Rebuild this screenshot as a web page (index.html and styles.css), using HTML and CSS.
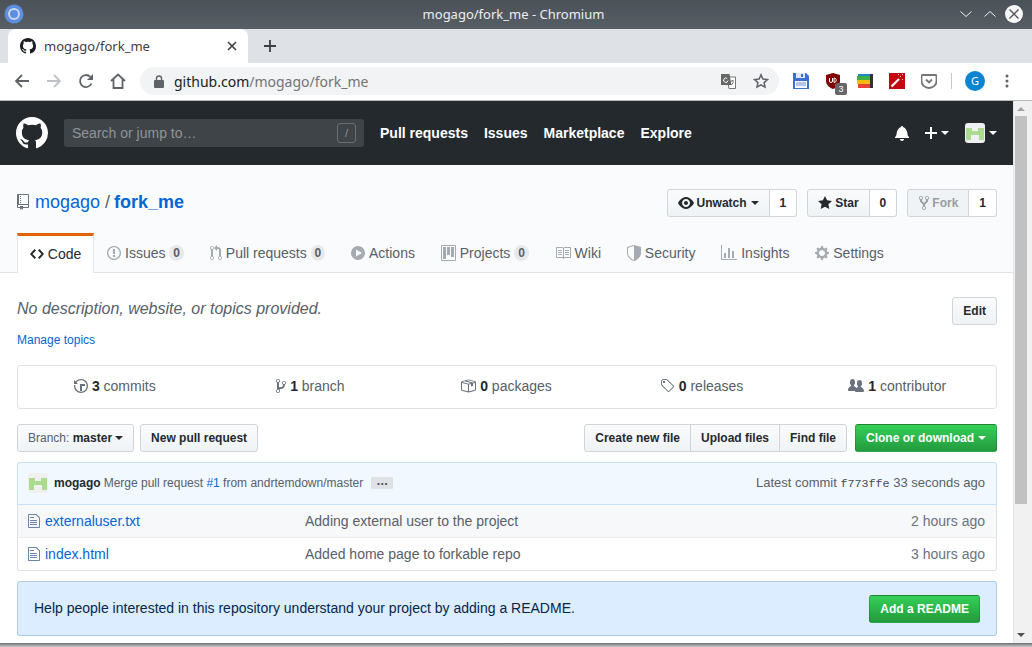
FILE: index.html
```html
<!DOCTYPE html>
<html lang="en">

<head>
  <meta charset="UTF-8">
  <title>mogago/fork_me - Chromium</title>
  <link rel="stylesheet" href="styles.css">
</head>

<body>
  <!-- Window title bar -->
  <div class="titlebar">
    <svg class="win-logo" width="20" height="20" viewBox="0 0 20 20"><circle cx="10" cy="10" r="9.5" fill="#5c8fe0"/><circle cx="10" cy="10" r="5" fill="none" stroke="#c9d6ea" stroke-width="2"/><circle cx="10" cy="10" r="3" fill="#5c8fe0"/></svg>
    <div class="win-title">mogago/fork_me - Chromium</div>
    <div class="win-controls">
      <svg width="14" height="14" viewBox="0 0 14 14"><path d="M1.5 4.500L7 9.500l5.500-5" fill="none" stroke="#f0f0f0" stroke-width="1"/></svg>
      <svg width="14" height="14" viewBox="0 0 14 14"><path d="M1.5 9.500L7 4.500l5.500 5" fill="none" stroke="#f0f0f0" stroke-width="1"/></svg>
      <svg class="win-close" width="18" height="18" viewBox="0 0 18 18"><circle cx="9" cy="9" r="9" fill="#f7f7f7"/><path d="M4.500 4.500l9 9M13.500 4.500l-9 9" stroke="#4d545b" stroke-width="1.3"/></svg>
    </div>
  </div>

  <!-- Tab strip -->
  <div class="tabstrip">
    <div class="browser-tab">
      <svg width="16" height="16" viewBox="0 0 16 16"><path fill="#1b1f23" fill-rule="evenodd" d="M8 0C3.58 0 0 3.58 0 8c0 3.54 2.29 6.53 5.47 7.59.4.07.55-.17.55-.38 0-.19-.01-.82-.01-1.49-2.01.37-2.53-.49-2.69-.94-.09-.23-.48-.94-.82-1.13-.28-.15-.68-.52-.01-.53.63-.01 1.08.58 1.23.82.72 1.21 1.87.87 2.33.66.07-.52.28-.87.51-1.07-1.78-.2-3.64-.89-3.64-3.95 0-.87.31-1.59.82-2.15-.08-.2-.36-1.02.08-2.12 0 0 .67-.21 2.2.82.64-.18 1.32-.27 2-.27.68 0 1.36.09 2 .27 1.53-1.04 2.2-.82 2.2-.82.44 1.1.16 1.92.08 2.12.51.56.82 1.27.82 2.15 0 3.07-1.87 3.75-3.65 3.95.29.25.54.73.54 1.48 0 1.07-.01 1.93-.01 2.2 0 .21.15.46.55.38A8.013 8.013 0 0016 8c0-4.42-3.58-8-8-8z"/></svg>
      <span class="browser-tab-title">mogago/fork_me</span>
      <svg width="10" height="10" viewBox="0 0 10 10"><path d="M1 1l8 8M9 1l-8 8" stroke="#3c4043" stroke-width="1.6"/></svg>
    </div>
    <svg class="newtab" width="14" height="14" viewBox="0 0 14 14"><path d="M7 1v12M1 7h12" stroke="#3c4043" stroke-width="1.8"/></svg>
  </div>

  <!-- Toolbar -->
  <div class="toolbar">
    <div class="nav-icons">
      <svg width="16" height="16" viewBox="0 0 16 16"><path d="M15 8H2M8 2L2 8l6 6" fill="none" stroke="#5f6368" stroke-width="1.8"/></svg>
      <svg width="16" height="16" viewBox="0 0 16 16"><path d="M1 8h13M8 2l6 6-6 6" fill="none" stroke="#bdc1c6" stroke-width="1.8"/></svg>
      <svg width="16" height="16" viewBox="0 0 16 16"><path d="M13.5 10.500A6 6 0 1 1 12.3 3.800" fill="none" stroke="#5f6368" stroke-width="1.8"/><path d="M15 1v6H9z" fill="#5f6368"/></svg>
      <svg width="16" height="16" viewBox="0 0 16 16"><path d="M1 8l7-6.500L15 8M3.500 6.500V15h9V6.500" fill="none" stroke="#5f6368" stroke-width="1.8"/></svg>
    </div>
    <div class="omnibox">
      <svg width="10" height="13" viewBox="0 0 10 13"><path fill="#5f6368" fill-rule="evenodd" d="M1 5h.8V3.500a3.200 3.200 0 0 1 6.400 0V5H9a1 1 0 0 1 1 1v6a1 1 0 0 1-1 1H1a1 1 0 0 1-1-1V6a1 1 0 0 1 1-1zM3.200 5h3.600V3.500a1.800 1.800 0 0 0-3.600 0z"/></svg>
      <div class="url"><span class="url-host">github.com</span>/mogago/fork_me</div>
      <svg class="translate" width="15" height="15" viewBox="0 0 15 15"><path d="M6 3h8.500v11.500H8z" fill="#fff" stroke="#757575"/><path d="M0 0h8.500l2 11H0z" fill="#666"/><path d="M7 6.500a2.200 2.200 0 1 1-.8-2" fill="none" stroke="#fff"/><path d="M10 7h3M11.500 6v1M10.500 11l2-3" stroke="#757575" fill="none"/></svg>
      <svg width="16" height="16" viewBox="0 0 16 16"><path d="M8 1.800l1.900 4.200 4.600.5-3.400 3.100.9 4.500-4-2.300-4 2.300.9-4.500-3.400-3.100 4.600-.5z" fill="none" stroke="#5f6368" stroke-width="1.5"/></svg>
    </div>
    <div class="ext-icons">
      <svg width="16" height="16" viewBox="0 0 16 16"><path d="M0 0h13l3 3v13H0z" fill="#3b6fd4"/><path d="M3 0h9v5H3z" fill="#dfe7f7"/><path d="M8 1h2v3H8z" fill="#3b6fd4"/><path d="M2 8h12v7H2z" fill="#fff"/><path d="M3 10h10M3 12h10" stroke="#6b8fd8"/></svg>
      <div class="ext-ublock">
        <svg width="16" height="16" viewBox="0 0 16 16"><path d="M8 0l7 2v6c0 4-4 7-7 8-3-1-7-4-7-8V2z" fill="#800000"/><path d="M4.500 5v3a1.500 1.500 0 0 0 3 0V5M9 5v4.500M9 5c3 0 3 4.500 0 4.500" fill="none" stroke="#fff"/></svg>
        <span class="ext-badge">3</span>
      </div>
      <svg width="16" height="16" viewBox="0 0 16 16"><path d="M1 1h15v14H1z" fill="#333"/><path d="M1 1h12v2H1z" fill="#1e88c7"/><path d="M0 3h13v4H0z" fill="#3fae49"/><path d="M0 7h13v4H0z" fill="#fbb80f"/><path d="M1 11h12v4H1z" fill="#ea4335"/></svg>
      <svg width="16" height="16" viewBox="0 0 16 16"><path d="M0 0h16v16H0z" fill="#c40812"/><path d="M2.500 13.500L10 6" stroke="#fff" stroke-width="2.2"/><path d="M11 3l1 1M13 6l1 1M13 2l1-1M9 1l1 1" stroke="#f4c9c9"/></svg>
      <svg width="16" height="16" viewBox="0 0 16 16"><path d="M1.500 2h13a1 1 0 0 1 1 1v5a7.500 7 0 0 1-15 0V3a1 1 0 0 1 1-1z" fill="none" stroke="#757575" stroke-width="1.8"/><path d="M5 6.500L8 9.500l3-3" fill="none" stroke="#757575" stroke-width="1.8"/></svg>
      <div class="toolbar-sep"></div>
      <div class="profile">G</div>
      <svg class="menu-dots" width="4" height="14" viewBox="0 0 4 14"><circle cx="2" cy="2" r="1.5" fill="#5f6368"/><circle cx="2" cy="7" r="1.5" fill="#5f6368"/><circle cx="2" cy="12" r="1.5" fill="#5f6368"/></svg>
    </div>
  </div>

  <div class="viewport">
    <div class="page">
      <!-- GitHub header -->
      <header class="gh-header">
        <svg class="gh-logo" width="32" height="32" viewBox="0 0 16 16"><path fill="#fff" fill-rule="evenodd" d="M8 0C3.58 0 0 3.58 0 8c0 3.54 2.29 6.53 5.47 7.59.4.07.55-.17.55-.38 0-.19-.01-.82-.01-1.49-2.01.37-2.53-.49-2.69-.94-.09-.23-.48-.94-.82-1.13-.28-.15-.68-.52-.01-.53.63-.01 1.08.58 1.23.82.72 1.21 1.87.87 2.33.66.07-.52.28-.87.51-1.07-1.78-.2-3.64-.89-3.64-3.95 0-.87.31-1.59.82-2.15-.08-.2-.36-1.02.08-2.12 0 0 .67-.21 2.2.82.64-.18 1.32-.27 2-.27.68 0 1.36.09 2 .27 1.53-1.04 2.2-.82 2.2-.82.44 1.1.16 1.92.08 2.12.51.56.82 1.27.82 2.15 0 3.07-1.87 3.75-3.65 3.95.29.25.54.73.54 1.48 0 1.07-.01 1.93-.01 2.2 0 .21.15.46.55.38A8.013 8.013 0 0016 8c0-4.42-3.58-8-8-8z"/></svg>
        <div class="gh-search">
          <span>Search or jump to…</span>
          <span class="slash-key">/</span>
        </div>
        <nav class="gh-nav">
          <a>Pull requests</a>
          <a>Issues</a>
          <a>Marketplace</a>
          <a>Explore</a>
        </nav>
        <div class="gh-user">
          <svg width="14" height="16" viewBox="0 0 14 16"><path fill="#fff" d="M14 12v1H0v-1l.73-.58c.77-.77.81-2.55 1.19-4.42C2.69 3.23 6 2 6 2c0-.55.45-1 1-1s1 .45 1 1c0 0 3.39 1.23 4.16 5 .38 1.88.42 3.66 1.19 4.42l.66.58H14zm-7 4c1.11 0 2-.89 2-2H5c0 1.11.89 2 2 2z"/></svg>
          <div class="gh-plus">
            <svg width="12" height="16" viewBox="0 0 12 16"><path fill="#fff" d="M12 9H7v5H5V9H0V7h5V2h2v5h5v2z"/></svg>
            <span class="caret caret-white"></span>
          </div>
          <div class="gh-avatar-wrap">
            <svg class="identicon" width="20" height="20" viewBox="0 0 20 20"><path d="M0 0h20v20H0z" fill="#f0f0f0"/><path d="M1 5h6v3h6V5h6v12h-5v-5H6v5H1z" fill="#abdb8f"/></svg>
            <span class="caret caret-white"></span>
          </div>
        </div>
      </header>

      <!-- Repo head -->
      <section class="repohead">
        <div class="repo-title-row">
          <h1 class="repo-title">
            <svg width="12" height="16" viewBox="0 0 12 16"><path fill="#6a737d" d="M4 9H3V8h1v1zm0-3H3v1h1V6zm0-2H3v1h1V4zm0-2H3v1h1V2zm8-1v12c0 .55-.45 1-1 1H6v2l-1.5-1.5L3 16v-2H1c-.55 0-1-.45-1-1V1c0-.55.45-1 1-1h10c.55 0 1 .45 1 1zm-1 10H1v2h2v-1h3v1h5v-2zm0-10H2v9h9V1z"/></svg>
            <a class="repo-owner">mogago</a>
            <span class="repo-sep">/</span>
            <a class="repo-name">fork_me</a>
          </h1>
          <div class="repo-actions">
            <div class="btn-pair">
              <a class="btn">
                <svg width="16" height="16" viewBox="0 0 16 16"><path fill="#24292e" d="M8.06 2C3 2 0 8 0 8s3 6 8.06 6C13 14 16 8 16 8s-3-6-7.94-6zM8 12c-2.2 0-4-1.78-4-4 0-2.2 1.8-4 4-4 2.22 0 4 1.8 4 4 0 2.22-1.78 4-4 4zm2-4c0 1.11-.89 2-2 2-1.11 0-2-.89-2-2 0-1.11.89-2 2-2 1.11 0 2 .89 2 2z"/></svg>
                Unwatch <span class="caret"></span>
              </a>
              <span class="social-count">1</span>
            </div>
            <div class="btn-pair">
              <a class="btn">
                <svg width="14" height="16" viewBox="0 0 14 16"><path fill="#24292e" d="M14 6l-4.9-.64L7 1 4.9 5.36 0 6l3.6 3.26L2.67 14 7 11.67 11.33 14l-.93-4.74L14 6z"/></svg>
                Star
              </a>
              <span class="social-count">0</span>
            </div>
            <div class="btn-pair">
              <a class="btn btn-disabled">
                <svg width="10" height="16" viewBox="0 0 10 16"><path fill="#959da5" fill-rule="evenodd" d="M8 1a1.993 1.993 0 00-1 3.72V6L5 8 3 6V4.72A1.993 1.993 0 002 1a1.993 1.993 0 00-1 3.72V6.5l3 3v1.78A1.993 1.993 0 005 15a1.993 1.993 0 001-3.72V9.5l3-3V4.72A1.993 1.993 0 008 1zM2 4.2C1.34 4.2.8 3.65.8 3c0-.65.55-1.2 1.2-1.2.65 0 1.2.55 1.2 1.2 0 .65-.55 1.2-1.2 1.2zm3 10c-.66 0-1.2-.55-1.2-1.2 0-.65.55-1.2 1.2-1.2.65 0 1.2.55 1.2 1.2 0 .65-.55 1.2-1.2 1.2zm3-10c-.66 0-1.2-.55-1.2-1.2 0-.65.55-1.2 1.2-1.2.65 0 1.2.55 1.2 1.2 0 .65-.55 1.2-1.2 1.2z"/></svg>
                Fork
              </a>
              <span class="social-count">1</span>
            </div>
          </div>
        </div>

        <nav class="repo-tabs">
          <a class="repo-tab selected">
            <svg width="14" height="16" viewBox="0 0 14 16"><path fill="#24292e" d="M9.5 3L8 4.5 11.5 8 8 11.5 9.5 13 14 8 9.5 3zm-5 0L0 8l4.5 5L6 11.5 2.5 8 6 4.5 4.5 3z"/></svg>
            Code
          </a>
          <a class="repo-tab">
            <svg width="14" height="16" viewBox="0 0 14 16"><path class="tab-icon" fill-rule="evenodd" d="M7 2.3c3.14 0 5.7 2.56 5.7 5.7s-2.56 5.7-5.7 5.7A5.71 5.71 0 011.3 8c0-3.14 2.56-5.7 5.7-5.7zM7 1C3.14 1 0 4.14 0 8s3.14 7 7 7 7-3.14 7-7-3.14-7-7-7zm1 3H6v5h2V4zm0 6H6v2h2v-2z"/></svg>
            Issues <span class="counter">0</span>
          </a>
          <a class="repo-tab">
            <svg width="12" height="16" viewBox="0 0 12 16"><path class="tab-icon" fill-rule="evenodd" d="M11 11.28V5c-.03-.78-.34-1.47-.94-2.06C9.46 2.35 8.78 2.03 8 2H7V0L4 3l3 3V4h1c.27.02.48.11.69.31.21.2.3.42.31.69v6.28A1.993 1.993 0 0010 15a1.993 1.993 0 001-3.72zm-1 2.92c-.66 0-1.2-.55-1.2-1.2 0-.65.55-1.2 1.2-1.2.65 0 1.2.55 1.2 1.2 0 .65-.55 1.2-1.2 1.2zM4 3c0-1.11-.89-2-2-2a1.993 1.993 0 00-1 3.72v6.56A1.993 1.993 0 002 15a1.993 1.993 0 001-3.72V4.72c.59-.34 1-.98 1-1.72zm-.8 10c0 .66-.55 1.2-1.2 1.2-.65 0-1.2-.55-1.2-1.2 0-.65.55-1.2 1.2-1.2.65 0 1.2.55 1.2 1.2zM2 4.2C1.34 4.2.8 3.65.8 3c0-.65.55-1.2 1.2-1.2.65 0 1.2.55 1.2 1.2 0 .65-.55 1.2-1.2 1.2z"/></svg>
            Pull requests <span class="counter">0</span>
          </a>
          <a class="repo-tab">
            <svg width="14" height="16" viewBox="0 0 14 16"><path class="tab-icon" fill-rule="evenodd" d="M14 8A7 7 0 1 1 0 8a7 7 0 0 1 14 0zM5 4.5v7l6-3.5z"/></svg>
            Actions
          </a>
          <a class="repo-tab">
            <svg width="15" height="16" viewBox="0 0 15 16"><path class="tab-icon" fill-rule="evenodd" d="M10 12h3V2h-3v10zm-4-2h3V2H6v8zm-4 4h3V2H2v12zm-1 1h13V1H1v14zM14 0H1a1 1 0 00-1 1v14a1 1 0 001 1h13a1 1 0 001-1V1a1 1 0 00-1-1z"/></svg>
            Projects <span class="counter">0</span>
          </a>
          <a class="repo-tab">
            <svg width="16" height="16" viewBox="0 0 16 16"><path class="tab-icon" fill-rule="evenodd" d="M3 5h4v1H3V5zm0 3h4V7H3v1zm0 2h4V9H3v1zm11-5h-4v1h4V5zm0 2h-4v1h4V7zm0 2h-4v1h4V9zm2-6v9c0 .55-.45 1-1 1H9.5l-1 1-1-1H2c-.55 0-1-.45-1-1V3c0-.55.45-1 1-1h5.5l1 1 1-1H15c.55 0 1 .45 1 1zm-8 .5L7.5 3H2v9h6V3.500zm7-.5H9.500l-.5.5V12h6V3z"/></svg>
            Wiki
          </a>
          <a class="repo-tab">
            <svg width="14" height="16" viewBox="0 0 14 16"><path class="tab-icon" fill-rule="evenodd" d="M7 0L0 2v6.020C0 12.690 5.310 16 7 16c1.690 0 7-3.310 7-7.980V2L7 0zm0 1.100v13.800C5.500 14.700 1 12 1 8.020V2.750z"/></svg>
            Security
          </a>
          <a class="repo-tab">
            <svg width="16" height="16" viewBox="0 0 16 16"><path class="tab-icon" d="M16 14v1H0V0h1v14h15zM5 13H3V8h2v5zm4 0H7V3h2v10zm4 0h-2V6h2v7z"/></svg>
            Insights
          </a>
          <a class="repo-tab">
            <svg width="14" height="16" viewBox="0 0 14 16"><path class="tab-icon" fill-rule="evenodd" d="M14 8.77v-1.6l-1.94-.64-.45-1.09.88-1.84-1.13-1.13-1.81.91-1.09-.45-.69-1.92h-1.6l-.63 1.94-1.11.45-1.84-.88-1.13 1.13.91 1.81-.45 1.09L0 7.23v1.59l1.94.64.45 1.09-.88 1.84 1.13 1.13 1.81-.91 1.09.45.69 1.92h1.59l.63-1.94 1.11-.45 1.84.88 1.13-1.13-.92-1.81.47-1.09L14 8.75v.02zM7 11c-1.66 0-3-1.34-3-3s1.34-3 3-3 3 1.34 3 3-1.34 3-3 3z"/></svg>
            Settings
          </a>
        </nav>
      </section>

      <!-- Repo content -->
      <main class="repo-content">
        <div class="repo-meta">
          <div>
            <div class="repo-desc">No description, website, or topics provided.</div>
            <a class="manage-topics">Manage topics</a>
          </div>
          <a class="btn">Edit</a>
        </div>

        <div class="numbers">
          <div class="num">
            <svg width="14" height="16" viewBox="0 0 14 16"><path class="num-icon" fill-rule="evenodd" d="M8 13H6V6h5v2H8v5zM7 1C4.81 1 2.87 2.02 1.59 3.59L0 2v4h4L2.5 4.5C3.55 3.17 5.17 2.3 7 2.3c3.14 0 5.7 2.56 5.7 5.7s-2.56 5.7-5.7 5.7A5.71 5.71 0 011.3 8c0-.34.03-.67.09-1H.08C.03 7.33 0 7.66 0 8c0 3.86 3.14 7 7 7s7-3.14 7-7-3.14-7-7-7z"/></svg>
            <span><b>3</b> commits</span>
          </div>
          <div class="num">
            <svg width="10" height="16" viewBox="0 0 10 16"><path class="num-icon" fill-rule="evenodd" d="M10 5c0-1.11-.89-2-2-2a1.993 1.993 0 00-1 3.72v.3c-.02.52-.23.98-.63 1.38-.4.4-.86.61-1.38.63-.83.02-1.48.16-2 .45V4.72a1.993 1.993 0 00-1-3.72C.88 1 0 1.89 0 3a2 2 0 001 1.72v6.56c-.59.35-1 .99-1 1.72 0 1.11.89 2 2 2 1.11 0 2-.89 2-2 0-.53-.2-1-.53-1.36.09-.06.48-.41.59-.47.25-.11.56-.17.94-.17 1.05-.05 1.95-.45 2.75-1.25S8.95 7.77 9 6.73h-.02C9.59 6.37 10 5.73 10 5zM2 1.8c.66 0 1.2.55 1.2 1.2 0 .65-.55 1.2-1.2 1.2C1.35 4.2.8 3.65.8 3c0-.65.55-1.2 1.2-1.2zm0 12.41c-.66 0-1.2-.55-1.2-1.2 0-.65.55-1.2 1.2-1.2.65 0 1.2.55 1.2 1.2 0 .65-.55 1.2-1.2 1.2zm6-8c-.66 0-1.2-.55-1.2-1.2 0-.65.55-1.2 1.2-1.2.65 0 1.2.55 1.2 1.2 0 .65-.55 1.2-1.2 1.2z"/></svg>
            <span><b>1</b> branch</span>
          </div>
          <div class="num">
            <svg width="16" height="16" viewBox="0 0 16 16"><path class="num-icon" fill-rule="evenodd" d="M1 4.27v7.47c0 .45.3.84.75.97l6.5 1.73c.16.05.34.05.5 0l6.5-1.73c.45-.13.75-.52.75-.97V4.27c0-.45-.3-.84-.75-.97l-6.5-1.74a1.4 1.4 0 00-.5 0L1.75 3.3c-.45.13-.75.52-.75.97zm7 9.09l-6-1.59V5l6 1.61v6.75zM2 4l2.5-.67L11 5.06l-2.5.67L2 4zm13 7.77l-6 1.59V6.61l2-.55V8.5l2-.53V5.53L15 5v6.77zm-2-7.24L6.5 2.8l2-.53L15 4l-2 .53z"/></svg>
            <span><b>0</b> packages</span>
          </div>
          <div class="num">
            <svg width="15" height="16" viewBox="0 0 15 16"><path class="num-icon" fill-rule="evenodd" d="M7.73 1.73C7.26 1.26 6.62 1 5.96 1H3.5C2.13 1 1 2.13 1 3.5v2.47c0 .66.27 1.3.73 1.77l6.06 6.06c.39.39 1.02.39 1.41 0l4.59-4.59a.996.996 0 000-1.41L7.73 1.73zM2.38 7.09c-.31-.3-.47-.7-.47-1.13V3.5c0-.88.72-1.59 1.59-1.59h2.47c.42 0 .83.16 1.13.47l6.14 6.13-4.73 4.73-6.13-6.15zM3.01 3h2v2H3V3h.01z"/></svg>
            <span><b>0</b> releases</span>
          </div>
          <div class="num">
            <svg width="16" height="16" viewBox="0 0 16 16"><path class="num-icon" d="M16 12.999c0 .439-.45 1-1 1H7.995c-.539 0-.994-.447-.995-.999H1c-.54 0-1-.561-1-1 0-2.634 3-4 3-4s.229-.409 0-1c-.841-.621-1.058-.59-1-3 .058-2.419 1.367-3 2.5-3s2.442.58 2.5 3c.058 2.41-.159 2.379-1 3-.229.59 0 1 0 1s1.549.711 2.42 2.088C9.196 9.369 10 8.999 10 8.999s.229-.409 0-1c-.841-.62-1.058-.59-1-3 .058-2.419 1.367-3 2.5-3s2.437.581 2.495 3c.059 2.41-.158 2.38-1 3-.229.59 0 1 0 1s3.005 1.366 3.005 4z"/></svg>
            <span><b>1</b> contributor</span>
          </div>
        </div>

        <div class="file-nav">
          <div class="file-nav-left">
            <a class="btn btn-branch"><span><span class="branch-label">Branch:</span> master</span> <span class="caret"></span></a>
            <a class="btn">New pull request</a>
          </div>
          <div class="file-nav-right">
            <div class="btn-group">
              <a class="btn">Create new file</a>
              <a class="btn">Upload files</a>
              <a class="btn">Find file</a>
            </div>
            <a class="btn btn-green">Clone or download <span class="caret caret-white"></span></a>
          </div>
        </div>

        <div class="file-wrap">
          <div class="commit-tease">
            <svg class="commit-avatar" width="20" height="20" viewBox="0 0 20 20"><path d="M0 0h20v20H0z" fill="#f0f0f0"/><path d="M1 5h6v3h6V5h6v12h-5v-5H6v5H1z" fill="#abdb8f"/></svg>
            <b class="commit-author">mogago</b>
            <span class="commit-msg">Merge pull request <a class="commit-link">#1</a> from andrtemdown/master</span>
            <span class="ellipsis">…</span>
            <span class="commit-meta">Latest commit <code>f773ffe</code> 33 seconds ago</span>
          </div>
          <div class="file-row file-row-grey">
            <div class="file-name">
              <svg width="12" height="16" viewBox="0 0 12 16"><path class="file-icon" fill-rule="evenodd" d="M6 5H2V4h4v1zM2 8h7V7H2v1zm0 2h7V9H2v1zm0 2h7v-1H2v1zm10-7.5V14c0 .55-.45 1-1 1H1c-.55 0-1-.45-1-1V2c0-.55.45-1 1-1h7.5L12 4.5zM11 5L8 2H1v12h10V5z"/></svg>
              <a>externaluser.txt</a>
            </div>
            <div class="file-msg">Adding external user to the project</div>
            <div class="file-age">2 hours ago</div>
          </div>
          <div class="file-row file-row-last">
            <div class="file-name">
              <svg width="12" height="16" viewBox="0 0 12 16"><path class="file-icon" fill-rule="evenodd" d="M6 5H2V4h4v1zM2 8h7V7H2v1zm0 2h7V9H2v1zm0 2h7v-1H2v1zm10-7.5V14c0 .55-.45 1-1 1H1c-.55 0-1-.45-1-1V2c0-.55.45-1 1-1h7.5L12 4.5zM11 5L8 2H1v12h10V5z"/></svg>
              <a>index.html</a>
            </div>
            <div class="file-msg">Added home page to forkable repo</div>
            <div class="file-age">3 hours ago</div>
          </div>
        </div>

        <div class="readme-flash">
          <span class="readme-text">Help people interested in this repository understand your project by adding a README.</span>
          <a class="btn btn-green">Add a README</a>
        </div>
      </main>
    </div>

    <!-- Scrollbar -->
    <div class="scrollbar">
      <div class="scroll-arrow scroll-up"></div>
      <div class="scroll-thumb"></div>
      <div class="scroll-arrow scroll-down"></div>
    </div>
  </div>

  <div class="window-edge"></div>
</body>

</html>
```

FILE: styles.css
```css
html,
body {
  margin: 0;
  height: 647px;
  overflow: hidden;
}

body {
  display: flex;
  flex-direction: column;
  font-family: "Liberation Sans", Arial, sans-serif;
  font-size: 14px;
  color: #24292e;
  background-color: #fff;
}

svg {
  flex: none;
  display: block;
}

a {
  text-decoration: none;
}

/* Window title bar */
.titlebar {
  height: 29px;
  flex: none;
  display: grid;
  grid-template-columns: 1fr auto 1fr;
  align-items: center;
  padding: 0 9px 1px 4px;
  box-sizing: border-box;
  background: linear-gradient(#4a5157, #575e65);
  color: #eceff1;
  font-family: "Noto Sans", sans-serif;
  font-size: 13px;
}

.win-controls {
  justify-self: end;
  display: flex;
  align-items: center;
  gap: 10px;
}

.win-close {
  margin-left: -2px;
}

/* Tab strip */
.tabstrip {
  height: 34px;
  flex: none;
  display: flex;
  align-items: center;
  padding-left: 8px;
  background-color: #dee1e6;
}

.browser-tab {
  width: 240px;
  height: 34px;
  box-sizing: border-box;
  display: flex;
  align-items: center;
  padding: 0 11px 0 12px;
  background-color: #fff;
  border-radius: 8px 8px 0 0;
}

.browser-tab-title {
  flex: 1;
  margin-left: 8px;
  font-family: "Noto Sans", sans-serif;
  font-size: 13px;
  color: #3c4043;
}

.newtab {
  margin-left: 15px;
}

/* Toolbar */
.toolbar {
  height: 38px;
  flex: none;
  box-sizing: border-box;
  display: flex;
  align-items: center;
  padding: 0 0 1px 14px;
  background-color: #fff;
  border-bottom: 1px solid #b7b9bb;
}

.nav-icons {
  display: flex;
  align-items: center;
  gap: 16px;
  margin-right: 14px;
}

.omnibox {
  width: 639px;
  height: 28px;
  box-sizing: border-box;
  display: flex;
  align-items: center;
  padding: 0 10px 0 14px;
  background-color: #f1f3f4;
  border-radius: 14px;
}

.url {
  flex: 1;
  margin-left: 10px;
  font-family: "Noto Sans", sans-serif;
  font-size: 14px;
  color: #70757a;
}

.url-host {
  color: #202124;
}

.translate {
  margin-right: 17px;
}

.ext-icons {
  display: flex;
  align-items: center;
  gap: 16px;
  margin-left: 14px;
}

.ext-ublock {
  position: relative;
}

.ext-badge {
  position: absolute;
  right: -6px;
  bottom: -6px;
  width: 12px;
  height: 12px;
  border-radius: 2px;
  background-color: #666;
  color: #fff;
  font-size: 9px;
  line-height: 12px;
  text-align: center;
}

.toolbar-sep {
  width: 1px;
  height: 16px;
  margin: 0 -3px 0 -2px;
  background-color: #c4c7c9;
}

.profile {
  width: 20px;
  height: 20px;
  border-radius: 50%;
  background-color: #0b85d1;
  color: #fff;
  font-family: "Noto Sans", sans-serif;
  font-size: 11px;
  line-height: 20px;
  text-align: center;
}

.menu-dots {
  margin-left: 4px;
}

/* Viewport */
.viewport {
  flex: 1;
  min-height: 0;
  display: flex;
}

.page {
  flex: 1;
  min-width: 0;
  overflow: hidden;
}

.scrollbar {
  width: 19px;
  flex: none;
  display: flex;
  flex-direction: column;
  align-items: center;
  padding-right: 4px;
  background-color: #f1f1f1;
  border-left: 1px solid #e6e6e6;
  box-sizing: border-box;
}

.scroll-arrow {
  width: 0;
  height: 0;
  border-left: 4px solid transparent;
  border-right: 4px solid transparent;
}

.scroll-up {
  margin: 6px 0 5px;
  border-bottom: 4px solid #a3a3a3;
}

.scroll-down {
  margin: auto 0 6px;
  border-top: 4px solid #505050;
}

.scroll-thumb {
  width: 12px;
  height: 388px;
  background-color: #c1c1c1;
}

.window-edge {
  height: 4px;
  flex: none;
  background: linear-gradient(#6d6f71, #c9cacb);
}

/* GitHub header */
.gh-header {
  height: 64px;
  box-sizing: border-box;
  display: flex;
  align-items: center;
  padding: 0 16px;
  background-color: #24292e;
}

.gh-logo {
  margin-right: 16px;
}

.gh-search {
  width: 300px;
  height: 28px;
  box-sizing: border-box;
  display: flex;
  align-items: center;
  justify-content: space-between;
  padding: 0 8px;
  border-radius: 3px;
  background-color: #3f4448;
  color: #8f9499;
}

.slash-key {
  width: 19px;
  height: 20px;
  box-sizing: border-box;
  border: 1px solid #6a6f74;
  border-radius: 3px;
  font-size: 11px;
  line-height: 18px;
  text-align: center;
}

.gh-nav {
  display: flex;
  gap: 16px;
  margin-left: 16px;
  font-weight: bold;
  color: #fff;
}

.gh-user {
  margin-left: auto;
  display: flex;
  align-items: center;
}

.gh-plus {
  display: flex;
  align-items: center;
  gap: 4px;
  margin-left: 16px;
}

.gh-avatar-wrap {
  display: flex;
  align-items: center;
  gap: 4px;
  margin-left: 16px;
}

.identicon {
  border-radius: 3px;
}

.caret {
  display: inline-block;
  width: 0;
  height: 0;
  vertical-align: middle;
  border-top: 4px solid #24292e;
  border-left: 4px solid transparent;
  border-right: 4px solid transparent;
}

.caret-white {
  border-top-color: #fff;
}

/* Repo head */
.repohead {
  height: 108px;
  box-sizing: border-box;
  padding: 24px 16px 0 17px;
  background-color: #fafbfc;
  border-bottom: 1px solid #e1e4e8;
}

.repo-title-row {
  display: flex;
  align-items: center;
  justify-content: space-between;
  height: 28px;
}

.repo-title {
  display: flex;
  align-items: center;
  margin: 0;
  padding-bottom: 2px;
  font-size: 18px;
  font-weight: normal;
  color: #586069;
}

.repo-owner {
  margin-left: 6px;
  color: #0366d6;
}

.repo-sep {
  margin: 0 4px 0 5px;
}

.repo-name {
  font-weight: bold;
  color: #0366d6;
}

.repo-actions {
  display: flex;
  gap: 10px;
}

.btn-pair {
  display: flex;
}

.btn {
  display: inline-flex;
  align-items: center;
  height: 28px;
  box-sizing: border-box;
  padding: 0 10px;
  border: 1px solid #d1d5da;
  border-radius: 3px;
  background: linear-gradient(#fafbfc, #eff3f6);
  color: #24292e;
  font-size: 12px;
  font-weight: bold;
  white-space: nowrap;
}

.btn svg {
  margin-right: 3px;
}

.btn .caret {
  margin-left: 4px;
}

.btn-branch .caret {
  margin-left: 3px;
}

.btn-pair .btn {
  border-radius: 3px 0 0 3px;
}

.btn-disabled {
  padding-left: 11px;
  color: #959da5;
  background: #eff3f6;
}

.social-count {
  display: flex;
  align-items: center;
  height: 28px;
  box-sizing: border-box;
  padding: 0 10px;
  border: 1px solid #d1d5da;
  border-left: 0;
  border-radius: 0 3px 3px 0;
  background-color: #fff;
  font-size: 12px;
  font-weight: bold;
}

.repo-tabs {
  display: flex;
  margin-top: 16px;
  height: 40px;
}

.repo-tab {
  display: flex;
  align-items: center;
  height: 40px;
  box-sizing: border-box;
  padding: 0 12px 2px;
  color: #586069;
  border: 1px solid transparent;
  border-top-width: 3px;
}

.repo-tab svg {
  margin-right: 3.8px;
}

.repo-tab.selected {
  color: #24292e;
  background-color: #fff;
  border-color: #e36209 #e1e4e8 #fff;
  border-bottom-width: 0;
}

.tab-icon {
  fill: #a3aab1;
}

.counter {
  display: inline-block;
  margin-left: 3.8px;
  padding: 2px 4px;
  border-radius: 20px;
  background-color: rgba(27, 31, 35, 0.08);
  color: #586069;
  font-size: 12px;
  font-weight: bold;
  line-height: 1;
}

/* Repo content */
.repo-content {
  padding: 24px 16px 0 17px;
  background-color: #fff;
}

.repo-meta {
  display: flex;
  justify-content: space-between;
  align-items: flex-start;
  height: 68px;
}

.repo-desc {
  font-size: 16px;
  font-style: italic;
  line-height: 24px;
  color: #586069;
}

.manage-topics {
  display: block;
  margin-top: 12px;
  font-size: 12px;
  color: #0366d6;
}

.numbers {
  display: flex;
  height: 44px;
  box-sizing: border-box;
  border: 1px solid #dfe2e5;
  border-radius: 3px;
}

.num {
  flex: 1;
  display: flex;
  align-items: center;
  justify-content: center;
  padding: 0 2px 2px 0;
  color: #586069;
}

.num svg {
  margin-right: 4px;
}

.num b {
  color: #24292e;
}

.num-icon {
  fill: #6a737d;
}

.file-nav {
  display: flex;
  justify-content: space-between;
  margin-top: 15px;
}

.file-nav-left,
.file-nav-right {
  display: flex;
}

.file-nav-left {
  gap: 6px;
}

.file-nav-right {
  gap: 8px;
}

.branch-label {
  color: #586069;
  font-weight: normal;
}

.btn-group {
  display: flex;
}

.btn-group .btn {
  border-radius: 0;
  margin-left: -1px;
}

.btn-group .btn:first-child {
  border-radius: 3px 0 0 3px;
  margin-left: 0;
}

.btn-group .btn:last-child {
  border-radius: 0 3px 3px 0;
}

.btn-green {
  color: #fff;
  border-color: rgba(27, 31, 35, 0.2);
  background: linear-gradient(#34d058, #239a3d);
}

/* File list */
.file-wrap {
  margin-top: 10px;
  border: 1px solid #dfe2e5;
  border-top: 0;
  border-radius: 3px;
}

.commit-tease {
  height: 43px;
  box-sizing: border-box;
  display: flex;
  align-items: center;
  margin: 0 -1px;
  padding: 0 11px 2px 10px;
  background-color: #f1f8ff;
  border: 1px solid #c8e1ff;
  border-radius: 3px 3px 0 0;
  font-size: 12px;
  color: #586069;
  white-space: pre;
}

.commit-avatar {
  border-radius: 3px;
  margin-right: 6px;
}

.commit-author {
  color: #24292e;
  margin-right: 3px;
}

.commit-link {
  color: #0366d6;
}

.ellipsis {
  width: 22px;
  height: 12px;
  margin-left: 8px;
  border-radius: 1px;
  background-color: #dfe2e5;
  color: #444d56;
  font-size: 12px;
  font-weight: bold;
  line-height: 8px;
  text-align: center;
}

.commit-meta {
  margin-left: auto;
  font-size: 13px;
}

.commit-meta code {
  font-family: "Liberation Mono", monospace;
  font-size: 11.7px;
  color: #444d56;
}

.file-row {
  height: 33px;
  box-sizing: border-box;
  display: flex;
  align-items: center;
  padding: 0 11px 0 10px;
  color: #586069;
}

.file-row-grey {
  background-color: #f6f8fa;
  border-bottom: 1px solid #eaecef;
}

.file-row-last {
  height: 32px;
}

.file-name {
  width: 277px;
  display: flex;
  align-items: center;
  gap: 5px;
  color: #0366d6;
}

.file-icon {
  fill: #6a86a8;
}

.file-msg {
  flex: 1;
}

.file-age {
  color: #6a737d;
}

.readme-flash {
  display: flex;
  align-items: center;
  justify-content: space-between;
  height: 55px;
  box-sizing: border-box;
  margin-top: 10px;
  padding: 0 16px;
  background-color: #dbedff;
  border: 1px solid rgba(4, 66, 137, 0.2);
  border-radius: 3px;
  color: #05264c;
}

.readme-text {
  margin-bottom: 2px;
}
```
